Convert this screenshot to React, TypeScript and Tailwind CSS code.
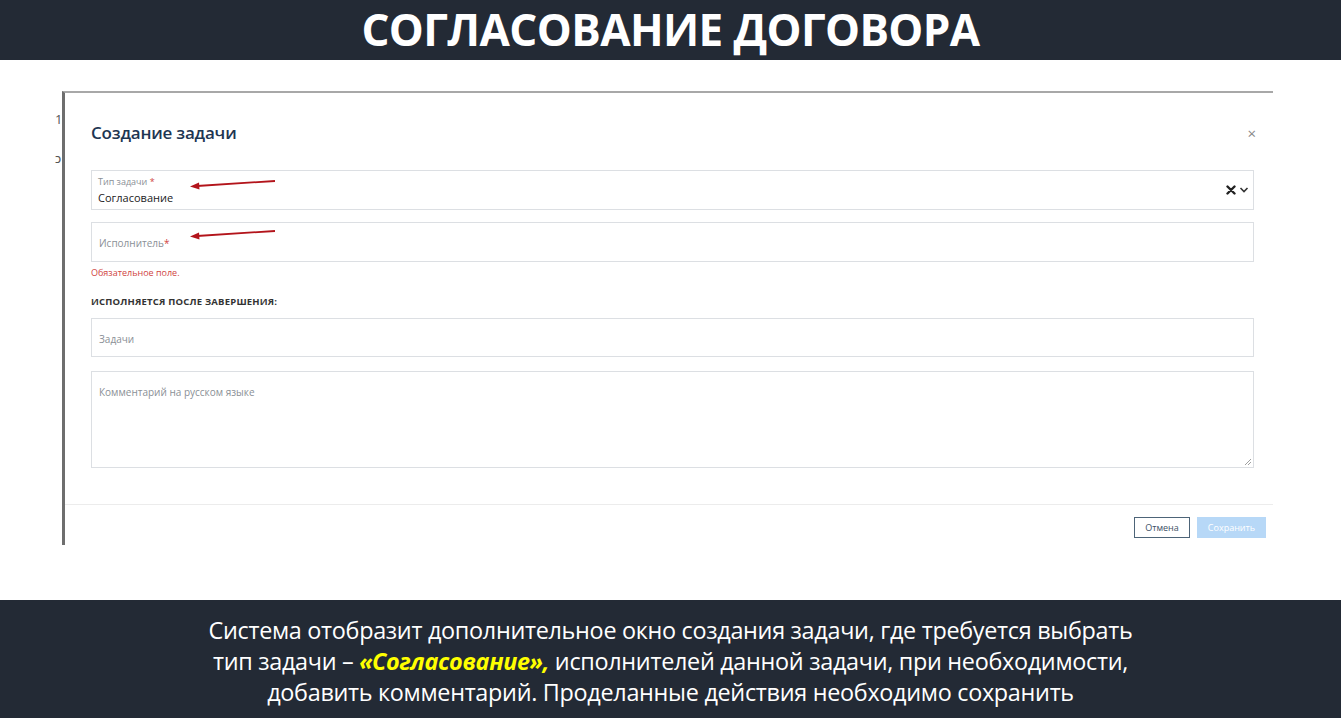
import React from 'react';

function RedArrow() {
  return (
    <svg width="88" height="12" viewBox="0 0 88 12" className="absolute">
      <line x1="86" y1="2" x2="8" y2="7" stroke="#b3141b" strokeWidth="1.8" />
      <polygon points="1,7.5 10,3.5 10.5,10.5" fill="#b3141b" />
    </svg>
  );
}

function SelectIcons() {
  return (
    <div className="flex items-center gap-[3px] text-[#222]">
      <svg width="10" height="10" viewBox="0 0 10 10">
        <path d="M1.5 1.5 L8.5 8.5 M8.5 1.5 L1.5 8.5" stroke="#222" strokeWidth="2.4" strokeLinecap="round" />
      </svg>
      <svg width="10" height="8" viewBox="0 0 10 8">
        <path d="M1.5 2 L5 5.5 L8.5 2" stroke="#333" strokeWidth="1.6" fill="none" />
      </svg>
    </div>
  );
}

export default function App() {
  return (
    <div className="w-[1341px] h-[718px] flex flex-col bg-white overflow-hidden" style={{ fontFamily: '"Open Sans", "Noto Sans", sans-serif' }}>
      {/* Header */}
      <div className="h-[60px] bg-[#232a35] flex items-start justify-center">
        <h1 className="text-white font-bold text-[44px] leading-[58px] tracking-[-0.6px]">
          СОГЛАСОВАНИЕ ДОГОВОРА
        </h1>
      </div>

      {/* Screenshot area */}
      <div className="h-[540px] relative">
        <div className="absolute left-[55px] top-[53px] text-[#555] text-[13px] leading-none">1</div>
        <div className="absolute left-[55px] top-[92px] text-[#555] text-[13px] leading-none">ɔ</div>

        <div className="ml-[62px] mt-[31px] w-[1211px] h-[454px] border-l-[3px] border-l-[#6e6e6e] border-t-[2px] border-t-[#a8a8a8] flex flex-col">
          <div className="pl-[26px] pr-[19px] flex-1">
            {/* Title row */}
            <div className="flex items-center justify-between h-[40px] mt-[20px]">
              <h2 className="text-[17px] font-semibold text-[#1e3652] tracking-[-0.2px]">Создание задачи</h2>
              <span className="text-[#888] text-[15px] leading-none mr-[-2px]">×</span>
            </div>

            {/* Тип задачи */}
            <div className="relative mt-[17px] h-[40px] w-[1163px] border border-[#dcdfe3] flex items-center justify-between pl-[6px] pr-[4px]">
              <div className="flex flex-col">
                <span className="text-[9px] text-[#8a8f96] leading-[10px] mt-[1px]">
                  Тип задачи <span className="text-[#d0453f]">*</span>
                </span>
                <span className="text-[11px] text-[#222] leading-[14px] mt-[4px]">Согласование</span>
              </div>
              <SelectIcons />
              <div className="absolute left-[97px] top-[8px]">
                <RedArrow />
              </div>
            </div>

            {/* Исполнитель */}
            <div className="relative mt-[12px] h-[40px] w-[1163px] border border-[#dcdfe3] flex items-center pl-[7px]">
              <span className="text-[10px] text-[#8a8f96] mt-[2px]">
                Исполнитель<span className="text-[#d0453f]">*</span>
              </span>
              <div className="absolute left-[97px] top-[6px]">
                <RedArrow />
              </div>
            </div>
            <div className="text-[9px] text-[#d0453f] mt-[5px] leading-[12px]">Обязательное поле.</div>

            <div className="text-[9.5px] font-bold text-[#333] mt-[17px] leading-[12px] tracking-[0.2px]">
              ИСПОЛНЯЕТСЯ ПОСЛЕ ЗАВЕРШЕНИЯ:
            </div>

            {/* Задачи */}
            <div className="mt-[10px] h-[39px] w-[1163px] border border-[#dcdfe3] flex items-center pl-[7px]">
              <span className="text-[10px] text-[#8a8f96] mt-[3px]">Задачи</span>
            </div>

            {/* Комментарий */}
            <div className="relative mt-[14px] h-[97px] w-[1163px] border border-[#dcdfe3] pl-[7px] pt-[6px]">
              <span className="text-[10px] text-[#8a8f96] leading-none">Комментарий на русском языке</span>
              <svg width="8" height="8" viewBox="0 0 8 8" className="absolute right-[1px] bottom-[1px]">
                <path d="M7 1 L1 7 M7 4 L4 7" stroke="#888" strokeWidth="0.8" />
              </svg>
            </div>
          </div>

          {/* Footer */}
          <div className="h-[41px] border-t border-[#ececec] flex items-start justify-end pr-[7px] pt-[12px] gap-[7px]">
            <button className="h-[21px] w-[56px] border-[1.5px] border-[#4d6478] text-[9px] text-[#3b5066] flex items-center justify-center">
              Отмена
            </button>
            <button className="h-[21px] w-[69px] bg-[#b7d8f7] text-[9px] text-white flex items-center justify-center">
              Сохранить
            </button>
          </div>
        </div>
      </div>

      {/* Bottom caption */}
      <div className="flex-1 bg-[#232a35] flex items-center justify-center">
        <p className="text-white text-[23.4px] leading-[31px] text-center tracking-[-0.3px] mt-[4px]">
          Система отобразит дополнительное окно создания задачи, где требуется выбрать
          <br />
          тип задачи – <span className="text-[#ffff00] font-bold italic">«Согласование»,</span> исполнителей данной задачи, при необходимости,
          <br />
          добавить комментарий. Проделанные действия необходимо сохранить
        </p>
      </div>
    </div>
  );
}
